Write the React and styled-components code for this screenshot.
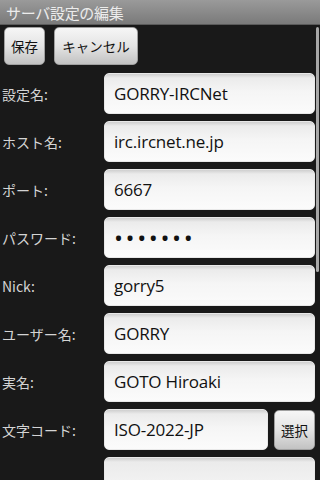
import React from 'react'
import styled, {createGlobalStyle} from 'styled-components'

const GlobalStyle = createGlobalStyle`
  html, body {
    margin: 0;
    padding: 0;
    background: #191919;
  }
  #root {
    width: 320px;
    height: 480px;
    overflow: hidden;
  }
`

const Screen = styled.div`
  position: relative;
  width: 320px;
  height: 480px;
  overflow: hidden;
  background: #191919;
  font-family: "Noto Sans CJK JP", "Noto Sans", sans-serif;
`

const TitleBar = styled.div`
  height: 25px;
  box-sizing: border-box;
  padding-left: 6px;
  display: flex;
  align-items: center;
  background: linear-gradient(#9a9a9a, #7a7a7a);
  border-bottom: 1px solid #5a5a5a;
  color: #ececec;
  font-size: 15px;
  letter-spacing: -0.3px;
`

const ButtonBar = styled.div`
  display: flex;
  gap: 9px;
  padding: 2px 0 0 4px;
  height: 38px;
`

const Button = styled.div`
  display: flex;
  align-items: center;
  justify-content: center;
  width: ${p => p.w}px;
  height: ${p => p.h || 38}px;
  box-sizing: border-box;
  border-radius: 5px;
  background: linear-gradient(#f6f6f6, #e4e4e4 50%, #c2c2c2);
  border: 1px solid #a0a0a0;
  color: #111;
  font-size: 13.5px;
  flex-shrink: 0;
`

const Form = styled.div`
  padding: 8px 5px 0 2px;
  display: flex;
  flex-direction: column;
  gap: 7px;
`

const Row = styled.div`
  display: flex;
  align-items: center;
  gap: 6px;
`

const Label = styled.div`
  width: 102px;
  flex-shrink: 0;
  color: #d4d4d4;
  font-size: 14px;
  margin-right: -6px;
`

const Field = styled.div`
  flex: 1;
  height: ${p => p.h || 41}px;
  box-sizing: border-box;
  border-radius: 5px;
  padding-left: 9px;
  display: flex;
  align-items: ${p => p.top ? 'flex-start' : 'center'};
  padding-top: ${p => p.top ? 19 : 0}px;
  background: linear-gradient(#cfcfcf 0, #ebebeb 4px, #f5f5f5 45%, #fbfbfb 100%);
  border: 1px solid #e8e8e8;
  color: #111;
  font-family: "Open Sans", "Noto Sans CJK JP", sans-serif;
  font-size: 17px;
  letter-spacing: -0.2px;
  white-space: nowrap;
  overflow: hidden;
`

const Dots = styled.span`
  font-size: 24px;
  letter-spacing: 2.6px;
  line-height: 1;
`

const ScrollBar = styled.div`
  position: absolute;
  right: 1px;
  top: 27px;
  width: 3px;
  height: 245px;
  border-radius: 2px;
  background: #a8a8a8;
`

const fields = [
  ['設定名:', 'GORRY-IRCNet'],
  ['ホスト名:', 'irc.ircnet.ne.jp'],
  ['ポート:', '6667'],
  ['パスワード:', null],
  ['Nick:', 'gorry5'],
  ['ユーザー名:', 'GORRY'],
  ['実名:', 'GOTO Hiroaki'],
]

const App = () => {
  return (
    <Screen>
      <GlobalStyle/>
      <TitleBar>サーバ設定の編集</TitleBar>
      <ButtonBar>
        <Button w={41}>保存</Button>
        <Button w={84}>キャンセル</Button>
      </ButtonBar>
      <Form>
        {fields.map(([label, value]) => (
          <Row key={label}>
            <Label>{label}</Label>
            <Field>{value === null ? <Dots>•••••••</Dots> : value}</Field>
          </Row>
        ))}
        <Row>
          <Label>文字コード:</Label>
          <Field>ISO-2022-JP</Field>
          <Button w={41} h={40}>選択</Button>
        </Row>
        <Row>
          <Label></Label>
          <Field h={80} top>#gorry,#ircnet-lobby</Field>
        </Row>
      </Form>
      <ScrollBar/>
    </Screen>
  )
}

export default App
